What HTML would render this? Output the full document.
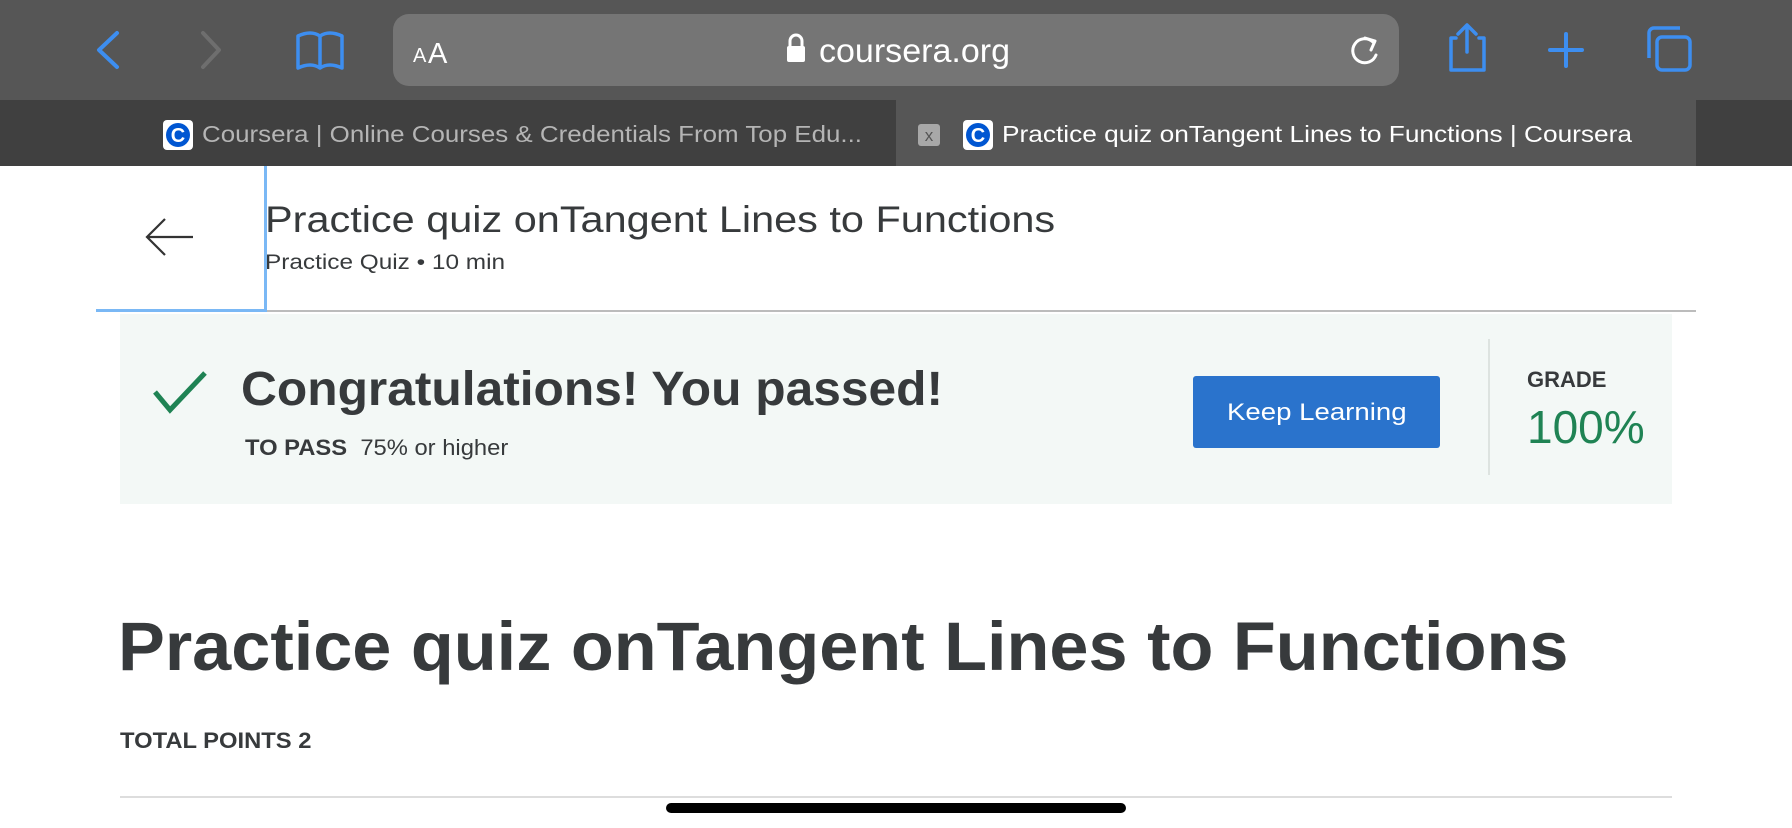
<!DOCTYPE html>
<html><head><meta charset="utf-8"><style>
*{margin:0;padding:0;box-sizing:border-box}
body{width:1792px;height:828px;overflow:hidden;background:#fff;font-family:"Liberation Sans",sans-serif;position:relative;color:#373a3c}
.a{position:absolute;transform-origin:0 0;white-space:nowrap}
</style></head><body>
<div class="a" style="left:0;top:0;width:1792px;height:100px;background:#565656"></div>
<div class="a" style="left:0;top:100px;width:896px;height:66px;background:#404040"></div>
<div class="a" style="left:896px;top:100px;width:800px;height:66px;background:#565656"></div>
<div class="a" style="left:1696px;top:100px;width:96px;height:66px;background:#404040"></div>
<svg class="a" style="left:0;top:0" width="1792" height="100">
<path d="M117 33 L99 50 L117 67" stroke="#3d8ef0" stroke-width="4" fill="none" stroke-linecap="round" stroke-linejoin="round"/>
<path d="M203 33 L219 50 L203 67" stroke="#6e6e6e" stroke-width="4" fill="none" stroke-linecap="round" stroke-linejoin="round"/>
<path d="M298 36 Q311 30 320 36 Q329 30 342 36 L342 68 Q329 62 320 68 Q311 62 298 68 Z M320 36 L320 68" stroke="#3d8ef0" stroke-width="3.5" fill="none" stroke-linejoin="round"/>
<rect x="393" y="14" width="1006" height="72" rx="16" fill="#757575"/>
<text x="413" y="62" fill="#fff" font-size="20" font-family="Liberation Sans">A</text>
<text x="428" y="63" fill="#fff" font-size="29" font-family="Liberation Sans">A</text>
<rect x="787" y="46" width="18" height="16" rx="2" fill="#fff"/>
<path d="M790 47 V41 a6 6 0 0 1 12 0 V47" stroke="#fff" stroke-width="3" fill="none"/>
<text x="819" y="62" fill="#fff" font-size="33" font-family="Liberation Sans" textLength="191" lengthAdjust="spacingAndGlyphs">coursera.org</text>
<path d="M1373 42 A12 12 0 1 0 1376 55" stroke="#fff" stroke-width="3" fill="none" stroke-linecap="round"/>
<path d="M1365 38 L1375 41 L1371 50" stroke="#fff" stroke-width="3" fill="none" stroke-linecap="round" stroke-linejoin="round"/>
<path d="M1456 38 H1451 V70 H1484 V38 H1479 M1467 52 V26 M1458 34 L1467 25 L1476 34" stroke="#3d8ef0" stroke-width="3.5" fill="none" stroke-linejoin="round" stroke-linecap="round"/>
<path d="M1566 34 V66 M1550 50 H1582" stroke="#3d8ef0" stroke-width="4" stroke-linecap="round"/>
<rect x="1657" y="37" width="33" height="33" rx="5" stroke="#3d8ef0" stroke-width="3.5" fill="none"/>
<path d="M1649 58 V33 a5 5 0 0 1 5 -5 H1680" stroke="#3d8ef0" stroke-width="3.5" fill="none"/>
</svg>
<svg class="a" style="left:0;top:100px" width="1792" height="66">
<rect x="163" y="20" width="30" height="30" rx="4" fill="#fff"/><circle cx="178" cy="35" r="12" fill="#0056d2"/><text x="178" y="42" fill="#fff" font-size="20" font-weight="bold" text-anchor="middle" font-family="Liberation Sans">C</text>
<text x="202" y="42" fill="#b5b5b5" font-size="23" font-family="Liberation Sans" textLength="660" lengthAdjust="spacingAndGlyphs">Coursera | Online Courses &amp; Credentials From Top Edu...</text>
<rect x="918" y="24" width="22" height="22" rx="3" fill="#a8a8a8"/><text x="929" y="41" fill="#555" font-size="17" text-anchor="middle" font-family="Liberation Sans">x</text>
<rect x="963" y="20" width="30" height="30" rx="4" fill="#fff"/><circle cx="978" cy="35" r="12" fill="#0056d2"/><text x="978" y="42" fill="#fff" font-size="20" font-weight="bold" text-anchor="middle" font-family="Liberation Sans">C</text>
<text x="1002" y="42" fill="#fff" font-size="23" font-family="Liberation Sans" textLength="630" lengthAdjust="spacingAndGlyphs">Practice quiz onTangent Lines to Functions | Coursera</text>
</svg>
<div class="a" style="left:96px;top:166px;width:171px;height:146px;border-right:3px solid #7ab8f5;border-bottom:3px solid #7ab8f5"></div>
<svg class="a" style="left:140px;top:210px" width="60" height="50"><path d="M53 27 H8 M25 9 L7 27 L25 45" stroke="#333" stroke-width="2.2" fill="none"/></svg>
<div class="a" style="left:265px;top:199px;font-size:37px;color:#373a3c;transform:scaleX(1.12)">Practice quiz onTangent Lines to Functions</div>
<div class="a" style="left:265px;top:251px;font-size:21px;color:#373a3c;transform:scaleX(1.16)">Practice Quiz • 10 min</div>
<div class="a" style="left:267px;top:310px;width:1429px;height:2px;background:#bcbcbc"></div>
<div class="a" style="left:120px;top:314px;width:1552px;height:190px;background:#f3f8f6"></div>
<svg class="a" style="left:150px;top:368px" width="60" height="50"><path d="M5 24 L20 42 L55 5" stroke="#1f8354" stroke-width="5" fill="none"/></svg>
<div class="a" style="left:241px;top:362px;font-size:48px;font-weight:bold;color:#373a3c;transform:scaleX(1.035)">Congratulations! You passed!</div>
<div class="a" style="left:245px;top:435px;font-size:22px;transform:scaleX(1.08)"><b>TO PASS</b>&nbsp; 75% or higher</div>
<div class="a" style="left:1193px;top:376px;width:247px;height:72px;background:#2a73cc;border-radius:3px"></div>
<div class="a" style="left:1227px;top:399px;color:#fff;font-size:24px;transform:scaleX(1.15)">Keep Learning</div>
<div class="a" style="left:1488px;top:339px;width:2px;height:136px;background:#dde3e0"></div>
<div class="a" style="left:1527px;top:367px;font-size:22px;font-weight:bold">GRADE</div>
<div class="a" style="left:1527px;top:400px;font-size:46px;color:#1f8354">100%</div>
<div class="a" style="left:118px;top:607px;font-size:69px;font-weight:bold;transform:scaleX(1.018)">Practice quiz onTangent Lines to Functions</div>
<div class="a" style="left:120px;top:728px;font-size:22px;font-weight:bold;transform:scaleX(1.08)">TOTAL POINTS 2</div>
<div class="a" style="left:120px;top:796px;width:1552px;height:2px;background:#ddd"></div>
<div class="a" style="left:666px;top:803px;width:460px;height:10px;background:#000;border-radius:5px"></div>
</body></html>
